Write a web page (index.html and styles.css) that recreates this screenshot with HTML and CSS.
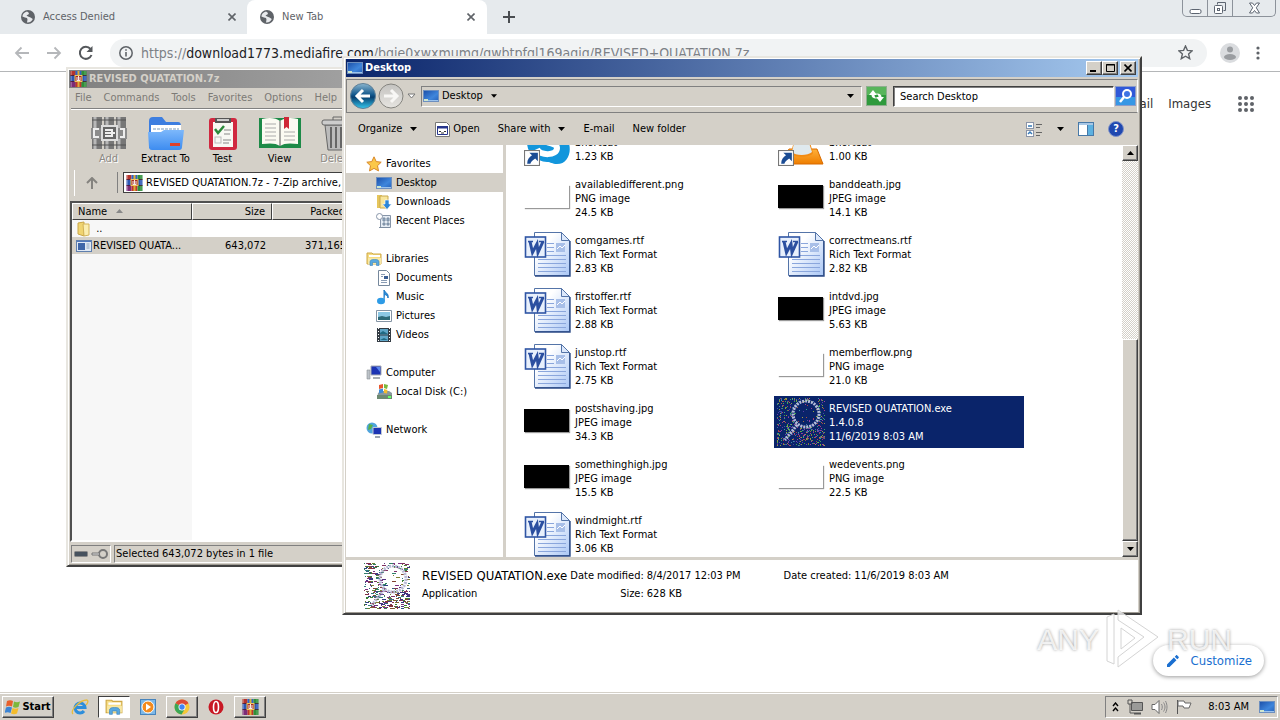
FILE: index.html
```html
<!DOCTYPE html>
<html lang="en">
<head>
    <meta charset="UTF-8">
    <meta name="viewport" content="width=device-width, initial-scale=1.0">
    <title>New Tab</title>
    <link rel="stylesheet" href="styles.css">
    <script src="noise.js" defer></script>
</head>
<body>
    <!-- shared icons -->
    <svg class="defs" width="0" height="0" aria-hidden="true">
        <defs>
            <linearGradient id="gPage" x1="0" y1="0" x2="1" y2="1"><stop offset=".3" stop-color="#fff"/><stop offset="1" stop-color="#a9c6f5"/></linearGradient>
            <linearGradient id="gScreen" x1="0" y1="0" x2="1" y2="1"><stop offset="0" stop-color="#1c4fa8"/><stop offset=".6" stop-color="#3f86dc"/><stop offset="1" stop-color="#2660b8"/></linearGradient>
            <linearGradient id="gBlue" x1="0" y1="0" x2="0" y2="1"><stop offset="0" stop-color="#7db8fb"/><stop offset="1" stop-color="#3d8cf0"/></linearGradient>
            <linearGradient id="gBack" x1="0" y1="0" x2="0" y2="1"><stop offset="0" stop-color="#8ab6cf"/><stop offset=".45" stop-color="#12578c"/><stop offset=".55" stop-color="#073f70"/><stop offset="1" stop-color="#35c8ee"/></linearGradient>
            <linearGradient id="gFwd" x1="0" y1="0" x2="0" y2="1"><stop offset="0" stop-color="#c4c3c0"/><stop offset="1" stop-color="#e6e4e0"/></linearGradient>
            <linearGradient id="gCone" x1="0" y1="0" x2="0" y2="1"><stop offset="0" stop-color="#ffb13a"/><stop offset="1" stop-color="#ee7d00"/></linearGradient>
        </defs>
        <symbol id="globe" viewBox="0 0 14 14">
            <circle cx="7" cy="7" r="7" fill="#5f6368"/>
            <path d="M6 1.500C3.500 2 1.500 4 1.400 6.500L4 7.500l2 .5.500 1.500L6 12.500c3 .3 5-1.500 5.800-3.500L9.500 7.500 7 6.500 5.500 5.500 8 4l-.5-1.500z" fill="#e8eaed"/>
        </symbol>
        <symbol id="cross" viewBox="0 0 8 8"><path d="M.5.500l7 7M7.500.500l-7 7" stroke="#5f6368" stroke-width="1.600"/></symbol>
        <symbol id="desktop" viewBox="0 0 16 14">
            <rect x=".5" y="1.500" width="15" height="11" fill="url(#gScreen)" stroke="#6d8fbf"/>
            <path d="M1 11h14v1H1z" fill="#9cc3ee"/><rect x="1" y="10" width="4" height="2" fill="#cfe6cf"/>
        </symbol>
        <symbol id="rar" viewBox="0 0 16 16">
            <path d="M0 0h5v5H0z" fill="#b5342c"/><path d="M5 0h6v5H5z" fill="#2f62c6"/><path d="M11 0h5v5h-5z" fill="#2f8f3a"/>
            <path d="M0 5h5v5H0z" fill="#2c56b4"/><path d="M11 5h5v5h-5z" fill="#2c56b4"/>
            <path d="M0 10h5v6H0z" fill="#7c2c78"/><path d="M5 10h6v6H5z" fill="#c0342c"/><path d="M11 10h5v6h-5z" fill="#2f8f3a"/>
            <path d="M1 0v16M14.500 0v16" stroke="#fff" stroke-opacity=".25"/>
            <path d="M0 4.500h16M0 10.500h16" stroke="#3d1836" stroke-width=".8"/>
            <path d="M7 0h2v16H7z" fill="#dcae38"/>
            <rect x="4.500" y="4.500" width="7" height="6" fill="#a52a22" stroke="#f0c860"/><path d="M6.500 6v3M8 5v4M9.500 6v3M6 9.500h4" stroke="#fff" stroke-width=".9"/>
        </symbol>
        <symbol id="word" viewBox="0 0 48 48">
            <path d="M11.500 2.500h27l8 8v35h-35z" fill="url(#gPage)" stroke="#5474a8"/>
            <path d="M47 11v35H12" fill="none" stroke="#2b4a86" stroke-width="1.400"/>
            <path d="M38.500 2.500v8h8z" fill="#dce8fb" stroke="#5474a8"/>
            <path d="M24 13.500h7M24 17.500h7M24 21.500h7M15 25.500h28M15 29.500h28M15 33.500h28M15 37.500h28M15 41.500h28" stroke="#8aa6dc"/>
            <rect x="33" y="13" width="9" height="9" fill="#a8bfe8"/><path d="M34 19l3-3 2 2 3-3" stroke="#fff" fill="none"/>
            <rect x="2.500" y="7" width="20" height="20" fill="#e8f0fc" stroke="#2f55a4" stroke-width="1.600"/>
            <path d="M7 11.500l2.500 11 4.500-8.500 1 8.500 5-11" fill="none" stroke="#2b4fa0" stroke-width="3"/>
            <path d="M5 11.500h5M16 11.500h5" stroke="#2b4fa0" stroke-width="1.500"/>
        </symbol>
        <symbol id="link" viewBox="0 0 15 15">
            <rect x=".5" y=".5" width="14" height="14" fill="#fff" stroke="#777"/>
            <path d="M5 2.500h8v8l-2.500-2.500C7.500 10 6.500 11 6 13H3c0-4 2-6.500 4.500-8z" fill="#1b4c94"/>
        </symbol>
        <symbol id="skype" viewBox="0 0 48 48">
            <path d="M24 3c13 0 20 8 20 18 6 10 2 25-10 25-5 0-6-2-10-2C12 43 4 35 4 24S12 3 24 3z" fill="#1296dc"/>
            <path d="M33 15c-3-6-18-6-18 2 0 9 19 6 19 13 0 8-17 8-20 1" fill="none" stroke="#fff" stroke-width="6"/>
        </symbol>
        <symbol id="vlc" viewBox="0 0 48 48">
            <path d="M12 31h28l6 15H3z" fill="url(#gCone)" stroke="#d86b00"/>
            <path d="M22 3h5l9 32c-3 5-19 5-22 0z" fill="#f28a12"/><path d="M17 25h15l3 9c-4 4-17 4-20 0z" fill="#dfe9ee"/>
        </symbol>
        <symbol id="folder" viewBox="0 0 16 16">
            <path d="M2 2l6-1v14l-6-2z" fill="#f0d470" stroke="#c9a648"/><path d="M7 3h6v11l-5 1z" fill="#fbeeb0" stroke="#d4b458"/>
        </symbol>
        <symbol id="lib" viewBox="0 0 16 16">
            <path d="M1 2h5l1 1h8v10H1z" fill="#f5dc83" stroke="#cfa845"/><path d="M3 4h11v2H3z" fill="#fff"/><path d="M2 7h13v6H2z" fill="#f8e8a4"/>
            <path d="M4 14.500V11c0-2 1.500-2.500 4.500-2.500S13 9 13 11v3.500h-2.500V11.500h-4v3z" fill="#58a8e0" stroke="#3a83bd" stroke-width=".6"/>
        </symbol>
        <symbol id="chevd" viewBox="0 0 7 4"><path d="M0 0h7L3.500 4z" fill="#000"/></symbol>
        <symbol id="paint" viewBox="0 0 16 16"><rect x=".5" y="2.500" width="15" height="11" fill="#dfe8f4" stroke="#5f7fae"/><path d="M1 3h14v1H1z" fill="#5279bd"/><path d="M2 5h7v7H2z" fill="#3f66a8"/><path d="M10.500 6h3M10.500 8h3M10.500 10h3" stroke="#8fa4bc"/></symbol>
    </svg>

    <main class="browser">
        <header class="tabs">
            <div class="tab">
                <svg width="14" height="14"><use href="#globe"/></svg>
                <span>Access Denied</span>
                <button aria-label="Close tab"><svg width="8" height="8"><use href="#cross"/></svg></button>
            </div>
            <div class="tab active">
                <svg width="14" height="14"><use href="#globe"/></svg>
                <span>New Tab</span>
                <button aria-label="Close tab"><svg width="8" height="8"><use href="#cross"/></svg></button>
            </div>
            <button class="plus" aria-label="New tab"><svg width="12" height="12" viewBox="0 0 12 12"><path d="M6 0v12M0 6h12" stroke="#4a4d51" stroke-width="2"/></svg></button>
            <div class="caption">
                <button aria-label="Minimize"><svg width="13" height="14" viewBox="0 0 13 14"><rect x="1" y="8.500" width="11" height="4" rx="1.500" fill="#fff" stroke="#5d6571"/></svg></button>
                <button aria-label="Restore"><svg width="14" height="14" viewBox="0 0 14 14"><path d="M4.500 3.500v-2h8v8h-2" fill="none" stroke="#5d6571"/><rect x="1.500" y="4.500" width="8" height="8" rx="1" fill="#fff" stroke="#5d6571"/><rect x="4.500" y="7.500" width="2" height="2" fill="none" stroke="#5d6571"/></svg></button>
                <button class="wide" aria-label="Close"><svg width="13" height="12" viewBox="0 0 13 12"><path d="M1.500 1h3l2 2.500L8.500 1h3L8.300 5.800l3.200 5.200h-3L6.500 8.500 4.500 11h-3l3.200-5.200z" fill="#fff" stroke="#5d6571"/></svg></button>
            </div>
        </header>
        <div class="navbar">
            <button aria-label="Back"><svg width="16" height="14" viewBox="0 0 16 14"><path d="M15 7H2M7.500 1.500L2 7l5.500 5.500" fill="none" stroke="#b5b7ba" stroke-width="1.800"/></svg></button>
            <button aria-label="Forward"><svg width="16" height="14" viewBox="0 0 16 14"><path d="M1 7h13M8.500 1.500L14 7l-5.500 5.500" fill="none" stroke="#b5b7ba" stroke-width="1.800"/></svg></button>
            <button aria-label="Reload"><svg width="16" height="16" viewBox="0 0 16 16"><path d="M13.500 10A6 6 0 1 1 12.500 4" fill="none" stroke="#55585c" stroke-width="2"/><path d="M14.500 1v6h-6z" fill="#55585c"/></svg></button>
            <div class="omnibox">
                <svg width="14" height="14" viewBox="0 0 14 14"><circle cx="7" cy="7" r="6.200" fill="none" stroke="#5f6368" stroke-width="1.500"/><path d="M7 6v4.500M7 3.200v1.600" stroke="#5f6368" stroke-width="1.600"/></svg>
                <span class="url">https://<b>download1773.mediafire.com</b>/bgie0xwxmumg/gwbtpfgl169agig/REVISED+QUATATION.7z</span>
                <svg class="star" width="15" height="15" viewBox="0 0 15 15"><path d="M7.500 1l1.900 4.400 4.800.4-3.600 3.200 1.100 4.700-4.200-2.500-4.200 2.500 1.100-4.700L.8 5.800l4.800-.4z" fill="none" stroke="#5f6368" stroke-width="1.400"/></svg>
            </div>
            <button aria-label="Profile"><svg width="20" height="20" viewBox="0 0 20 20"><circle cx="10" cy="10" r="10" fill="#dadcdf"/><circle cx="10" cy="6.500" r="3" fill="#9a9da1"/><ellipse cx="10" cy="14" rx="6" ry="3" fill="#9a9da1"/></svg></button>
            <button aria-label="Menu"><svg width="4" height="14" viewBox="0 0 4 14"><g fill="#5f6368"><circle cx="2" cy="2" r="1.600"/><circle cx="2" cy="7" r="1.600"/><circle cx="2" cy="12" r="1.600"/></g></svg></button>
        </div>
        <section class="page">
            <nav class="links">
                <a href="#">Gmail</a>
                <a href="#">Images</a>
                <button aria-label="Apps"><svg width="16" height="16" viewBox="0 0 16 16"><g fill="#5f6368"><circle cx="2" cy="2" r="2"/><circle cx="8" cy="2" r="2"/><circle cx="14" cy="2" r="2"/><circle cx="2" cy="8" r="2"/><circle cx="8" cy="8" r="2"/><circle cx="14" cy="8" r="2"/><circle cx="2" cy="14" r="2"/><circle cx="8" cy="14" r="2"/><circle cx="14" cy="14" r="2"/></g></svg></button>
            </nav>
            <button class="customize"><svg width="12" height="12" viewBox="0 0 14 14"><path d="M0 14v-3l8-8 3 3-8 8zM9 2l1.500-1.500c.5-.5 1-.5 1.500 0L13.500 2c.5.500.5 1 0 1.500L12 5z" fill="#1a6fd0"/></svg>Customize</button>
        </section>
    </main>

    <section class="window rarwin">
        <div class="title off"><svg width="17" height="16"><use href="#rar"/></svg>REVISED QUATATION.7z</div>
        <div class="menu"><span>File</span><span>Commands</span><span>Tools</span><span>Favorites</span><span>Options</span><span>Help</span></div>
        <div class="rartools">
            <button class="dim"><svg width="36" height="36" viewBox="0 0 36 36"><path d="M1 2h10v32H1zM13 2h10v32H13zM25 2h10v32H25z" fill="#777"/><path d="M4 2v32M16 2v32M28 2v32" stroke="#b8b8b8" stroke-width="3"/><path d="M1 5h34M1 30h34" stroke="#555"/><path d="M0 13h36v11H0z" fill="#8c8c8c"/><rect x="11" y="11" width="15" height="14" fill="#666" stroke="#ddd" stroke-width="2"/><path d="M8 14H3v8h5M29 14h4v8h-4M14 15h7v6h-7M14 18h10" fill="none" stroke="#eee" stroke-width="2"/></svg>Add</button>
            <button><svg width="36" height="36" viewBox="0 0 36 36"><path d="M1 6q0-4 4-4h9l4 5h12q3 0 3 4v22H1z" fill="#3d7ee0"/><path d="M3 10h30v12H3z" fill="#fff"/><path d="M5 14h26" stroke="#bcd" stroke-width="2" stroke-dasharray="3 1"/><path d="M0 17h13l3-2h20l-2 17q0 3-3 3H4q-3 0-3-3z" fill="url(#gBlue)"/><rect x="22" y="28" width="10" height="3" fill="#e0402c"/></svg>Extract To</button>
            <button><svg width="36" height="36" viewBox="0 0 36 36"><rect x="4" y="3" width="28" height="32" rx="3" fill="#d02840"/><rect x="8" y="7" width="20" height="25" fill="#f8f8f4"/><path d="M10 3h16v5H10z" fill="#555"/><path d="M12 5h12" stroke="#ccc" stroke-width="2"/><path d="M10 14l3 4 6-7" fill="none" stroke="#2c8a3c" stroke-width="2.500"/><path d="M19 15h7M19 19h6M18 25h8M18 28h6" stroke="#888"/><rect x="10" y="22" width="6" height="6" fill="none" stroke="#bbb"/></svg>Test</button>
            <button><svg width="42" height="36" viewBox="0 0 42 36"><path d="M0 3h42v30H0z" fill="#1d8a48"/><path d="M3 4c8-2 14-1 18 2 4-3 10-4 18-2v25c-8-1-14-1-18 2-4-3-10-3-18-2z" fill="#fbfaf2"/><path d="M21 6v25" stroke="#555"/><path d="M6 9h11M6 13h11M6 17h11M6 21h11M6 25h11M25 17h11M25 21h11M25 25h11" stroke="#aaa"/><path d="M25 2h5v12l-2.500-2-2.500 2z" fill="#cf2736"/></svg>View</button>
            <button class="dim"><svg width="36" height="36" viewBox="0 0 36 36"><path d="M6 10h25l-2 25H9z" fill="#bbb" stroke="#666"/><path d="M12 12v21M17 12v21M22 12v21M27 12v21" stroke="#666" stroke-width="2"/><rect x="3" y="5" width="31" height="5" rx="2" fill="#ccc" stroke="#666"/><path d="M14 5V2h9v3" fill="none" stroke="#666"/></svg>Delete</button>
        </div>
        <div class="raraddr">
            <button aria-label="Up"><svg width="12" height="12" viewBox="0 0 12 12"><path d="M6 12V1M1 6l5-5 5 5" fill="none" stroke="#85837f" stroke-width="2"/></svg></button>
            <label class="path"><svg width="17" height="16"><use href="#rar"/></svg><input aria-label="Archive path" value="REVISED QUATATION.7z - 7-Zip archive, unpacked size 643,072 bytes"></label>
        </div>
        <div class="rarlist">
            <table>
                <thead><tr><th class="name">Name <svg width="7" height="4" viewBox="0 0 7 4"><path d="M0 4h7L3.500 0z" fill="#888"/></svg></th><th class="num">Size</th><th class="num">Packed</th><th>Type</th></tr></thead>
                <tbody>
                    <tr><td><svg width="16" height="16"><use href="#folder"/></svg> ..</td><td></td><td></td><td></td></tr>
                    <tr class="sel"><td><svg width="16" height="16"><use href="#paint"/></svg>REVISED QUATA...</td><td class="num">643,072</td><td class="num">371,165</td><td>Application</td></tr>
                </tbody>
            </table>
        </div>
        <div class="rarstatus">
            <span><svg width="36" height="12" viewBox="0 0 36 12"><rect x="1.500" y="3.500" width="13" height="5" rx="1" fill="#47525e" stroke="#888"/><circle cx="30" cy="6" r="4" fill="none" stroke="#777" stroke-width="2"/><path d="M26 5h-7v2h7" fill="#ddd" stroke="#777"/></svg></span>
            <span class="grow">Selected 643,072 bytes in 1 file</span>
        </div>
    </section>

    <section class="window explorer">
        <div class="title"><svg width="16" height="14"><use href="#desktop"/></svg>Desktop
            <div class="winbtns">
                <button aria-label="Minimize"><svg width="8" height="8" viewBox="0 0 8 8"><path d="M0 6h6v2H0z"/></svg></button>
                <button aria-label="Maximize"><svg width="9" height="8" viewBox="0 0 9 8"><path d="M.5.500h8v7h-8zM0 1h9" fill="none" stroke="#000"/></svg></button>
                <button class="shut" aria-label="Close"><svg width="8" height="8" viewBox="0 0 8 8"><path d="M.5.500l7 7M7.500.500l-7 7" stroke="#000" stroke-width="1.600"/></svg></button>
            </div>
        </div>
        <div class="address">
            <button aria-label="Back"><svg width="26" height="26" viewBox="0 0 26 26"><circle cx="13" cy="13" r="12.500" fill="url(#gBack)" stroke="#5f7f96"/><path d="M20 13H8M13 7l-6 6 6 6" fill="none" stroke="#fff" stroke-width="3"/></svg></button>
            <button aria-label="Forward"><svg width="26" height="26" viewBox="0 0 26 26"><circle cx="13" cy="13" r="12" fill="url(#gFwd)" stroke="#85847f"/><path d="M6 13h12M13 7l6 6-6 6" fill="none" stroke="#f8f7f5" stroke-width="3"/></svg></button>
            <button class="hist" aria-label="Recent pages"><svg width="9" height="6" viewBox="0 0 9 6"><path d="M1 1h7L4.500 5z" fill="#fff" stroke="#777"/></svg></button>
            <div class="crumb"><svg width="16" height="14"><use href="#desktop"/></svg><span>Desktop</span><svg width="6" height="4"><use href="#chevd"/></svg><svg class="end" width="7" height="4"><use href="#chevd"/></svg></div>
            <button class="sq" aria-label="Refresh"><svg width="21" height="20" viewBox="0 0 21 20"><rect x=".5" y=".5" width="20" height="19" fill="#2f9a3c" stroke="#8fae8f"/><path d="M1 1h19v8H1z" fill="#74c870" opacity=".6"/><path d="M3 9l4-5 4 5H8.500c0 2 1 3 3 3.500C7.500 13 5.500 11.500 5.500 9zM18 11l-4 5-4-5h2.500c0-2-1-3-3-3.500 4-.5 6 1 6 3.500z" fill="#fff"/></svg></button>
            <input class="search" type="text" aria-label="Search Desktop" placeholder="Search Desktop">
            <button class="sq" aria-label="Search"><svg width="21" height="20" viewBox="0 0 21 20"><rect x=".5" y=".5" width="20" height="19" fill="#3058d8" stroke="#8c9cc8"/><path d="M1 11h19v8H1z" fill="#38a8e8" opacity=".8"/><circle cx="12" cy="8" r="4" fill="#3e74e4" stroke="#fff" stroke-width="2"/><path d="M9 11l-4 5" stroke="#fff" stroke-width="2.500"/></svg></button>
        </div>
        <div class="commands">
            <button>Organize<svg width="7" height="4"><use href="#chevd"/></svg></button>
            <button class="open"><svg width="15" height="15" viewBox="0 0 15 15"><path d="M.5.500h11l3 3v11H.5z" fill="#fff" stroke="#777"/><path d="M2.500 4.500h10v8h-10z" fill="#fff" stroke="#26358c"/><path d="M2 4h11v2.500H2z" fill="#26358c"/><path d="M4 9.500h2M9 9.500h2M6 11h3" stroke="#333"/></svg>Open</button>
            <button>Share with<svg width="7" height="4"><use href="#chevd"/></svg></button>
            <button>E-mail</button>
            <button>New folder</button>
            <div class="views">
                <button aria-label="Change view"><svg width="17" height="15" viewBox="0 0 17 15"><rect x=".5" y=".5" width="7" height="6" fill="#fff" stroke="#8a94a8"/><rect x=".5" y="8.500" width="7" height="6" fill="#fff" stroke="#8a94a8"/><path d="M2 4h4M2 12l2-2 2 2" stroke="#3579b8" stroke-width="1.500" fill="none"/><path d="M10 2.500h6M10 5.500h4M10 10.500h6M10 13.500h4" stroke="#666"/></svg></button>
                <button aria-label="View options"><svg width="7" height="4"><use href="#chevd"/></svg></button>
                <button class="pane" aria-label="Preview pane"><svg width="16" height="14" viewBox="0 0 16 14"><rect x=".5" y=".5" width="15" height="13" fill="#fff" stroke="#4779a8"/><path d="M1 1h14v2H1z" fill="#a9c8e6"/><path d="M10 3h5v10h-5z" fill="#5db1e0"/><path d="M9.500 3v10" stroke="#4779a8"/></svg></button>
                <button class="help" aria-label="Help">?</button>
            </div>
        </div>
        <div class="body">
            <nav class="tree">
                <a href="#" class="root"><svg width="16" height="16" viewBox="0 0 16 16"><path d="M8 .8l2.200 4.800 5 .6-3.700 3.500 1 5.200L8 12.400l-4.500 2.500 1-5.200L.8 6.200l5-.6z" fill="#fbc84a" stroke="#d8882a"/></svg>Favorites</a>
                <a href="#" class="on"><svg width="16" height="14"><use href="#desktop"/></svg>Desktop</a>
                <a href="#"><svg width="16" height="16" viewBox="0 0 16 16"><path d="M1 1h5v13H1z" fill="#e6c65c"/><path d="M4 2h8v12H4z" fill="#f8e59a" stroke="#c8a84c"/><path d="M9 6h4v4h2.500L11 15.500 6.500 10H9z" fill="#2c86d8" stroke="#fff" stroke-width=".6"/></svg>Downloads</a>
                <a href="#"><svg width="16" height="16" viewBox="0 0 16 16"><path d="M4.500 2.500h10v12h-10z" fill="#e4ecf4" stroke="#8795a8"/><path d="M3 14.500h11M7 5h2v3H7zM11 5h2v3h-2zM7 10h2v2H7zM11 10h2v2h-2z" fill="#8fb0cc" stroke="#7c8ca0"/><circle cx="3.500" cy="3.500" r="3" fill="#fff" stroke="#8795a8"/></svg>Recent Places</a>
                <a href="#" class="root gap"><svg width="16" height="16"><use href="#lib"/></svg>Libraries</a>
                <a href="#"><svg width="16" height="16" viewBox="0 0 16 16"><path d="M2.500.500h8l3 3v12h-11z" fill="#fff" stroke="#76889c"/><path d="M5 4.500h4M5 6.500h2M5 10.500h6M5 12.500h6" stroke="#8a9cb4"/><path d="M8 6h4v3H8z" fill="#3a5f94"/></svg>Documents</a>
                <a href="#"><svg width="16" height="16" viewBox="0 0 16 16"><path d="M8 12V1c1 3 5 3 4 8 0-2-1.500-3-3-3.500" fill="#2d8fdc" stroke="#1b78c4"/><ellipse cx="5" cy="12" rx="4" ry="3.200" fill="#2d9be6"/></svg>Music</a>
                <a href="#"><svg width="16" height="16" viewBox="0 0 16 16"><path d="M.5 2.500h15v11H.5z" fill="#fff" stroke="#8494a4"/><path d="M2 4h12v8H2z" fill="#8cc8e4"/><path d="M2 9l4-1 4 1 4-1v4H2z" fill="#2d6a78"/></svg>Pictures</a>
                <a href="#"><svg width="16" height="16" viewBox="0 0 16 16"><path d="M1 1h14v14H1z" fill="#333c44"/><path d="M4 2h8v5.500H4zM4 8.500h8V14H4z" fill="#5fa6c8"/><path d="M2.500 1v14M13.500 1v14" stroke="#fff" stroke-dasharray="1 2"/><path d="M4 6l3-2 5 3H4zM4 13l4-2 4 2z" fill="#1f6a84"/></svg>Videos</a>
                <a href="#" class="root gap"><svg width="16" height="16" viewBox="0 0 16 16"><path d="M1 5h3v9H1z" fill="#bcc2c8" stroke="#8a9096" stroke-width=".6"/><path d="M5 1h10v9H5z" fill="#1c34b4" stroke="#a4aab4"/><path d="M10 2h4v5z" fill="#5c88f0"/><path d="M7 12h7v2H7z" fill="#a8aeb4"/></svg>Computer</a>
                <a href="#"><svg width="16" height="16" viewBox="0 0 16 16"><path d="M2 9l3-2h8l3 2v6H1z" fill="#8a989c"/><path d="M1 11h15v4H1z" fill="#6d8a72"/><path d="M12 12h3v2h-3z" fill="#6f6"/><path d="M3 1l4-1v4l-4 1z" fill="#e8562c"/><path d="M8 0l4 1-1 4-3-1z" fill="#7cb83c"/><path d="M3 5.500l4-1v4l-4 1z" fill="#3c8cd8"/><path d="M8 5l3.500 1-.5 3.500L8 9z" fill="#f4bc2c"/></svg>Local Disk (C:)</a>
                <a href="#" class="root gap"><svg width="16" height="16" viewBox="0 0 16 16"><circle cx="6" cy="6" r="5.500" fill="#4fa4dc"/><path d="M3 2l4 1-2 4-3 1zM7 7l3 1-2 3z" fill="#58b048"/><path d="M7 5.500h8.500v7H7z" fill="#1c34b4" stroke="#c0c8d4"/><path d="M9 14h5v2H9z" fill="#9aa4b0"/></svg>Network</a>
            </nav>
            <div class="files">
                <ul>
                    <li><div class="ico"><svg width="48" height="48"><use href="#skype"/></svg><svg class="badge" width="16" height="16"><use href="#link"/></svg></div><p><br>Shortcut<br>1.23 KB</p></li>
                    <li><div class="ico"><svg width="48" height="48"><use href="#vlc"/></svg><svg class="badge" width="16" height="16"><use href="#link"/></svg></div><p><br>Shortcut<br>1.00 KB</p></li>
                    <li><div class="ico"><i class="thumb"></i></div><p>availabledifferent.png<br>PNG image<br>24.5 KB</p></li>
                    <li><div class="ico"><i class="thumb black"></i></div><p>banddeath.jpg<br>JPEG image<br>14.1 KB</p></li>
                    <li><div class="ico"><svg width="48" height="48"><use href="#word"/></svg></div><p>comgames.rtf<br>Rich Text Format<br>2.83 KB</p></li>
                    <li><div class="ico"><svg width="48" height="48"><use href="#word"/></svg></div><p>correctmeans.rtf<br>Rich Text Format<br>2.82 KB</p></li>
                    <li><div class="ico"><svg width="48" height="48"><use href="#word"/></svg></div><p>firstoffer.rtf<br>Rich Text Format<br>2.88 KB</p></li>
                    <li><div class="ico"><i class="thumb black"></i></div><p>intdvd.jpg<br>JPEG image<br>5.63 KB</p></li>
                    <li><div class="ico"><svg width="48" height="48"><use href="#word"/></svg></div><p>junstop.rtf<br>Rich Text Format<br>2.75 KB</p></li>
                    <li><div class="ico"><i class="thumb"></i></div><p>memberflow.png<br>PNG image<br>21.0 KB</p></li>
                    <li><div class="ico"><i class="thumb black"></i></div><p>postshaving.jpg<br>JPEG image<br>34.3 KB</p></li>
                    <li class="picked"><div class="ico"><canvas class="noise" data-mode="dark" width="48" height="48"></canvas></div><p>REVISED QUATATION.exe<br>1.4.0.8<br>11/6/2019 8:03 AM</p></li>
                    <li><div class="ico"><i class="thumb black"></i></div><p>somethinghigh.jpg<br>JPEG image<br>15.5 KB</p></li>
                    <li><div class="ico"><i class="thumb"></i></div><p>wedevents.png<br>PNG image<br>22.5 KB</p></li>
                    <li><div class="ico"><svg width="48" height="48"><use href="#word"/></svg></div><p>windmight.rtf<br>Rich Text Format<br>3.06 KB</p></li>
                </ul>
            </div>
            <div class="scroll">
                <button aria-label="Scroll up"><svg width="7" height="4" viewBox="0 0 7 4"><path d="M0 4h7L3.500 0z"/></svg></button>
                <div class="track"></div>
                <div class="grip"></div>
                <button aria-label="Scroll down"><svg width="7" height="4"><use href="#chevd"/></svg></button>
            </div>
        </div>
        <footer class="details">
            <canvas class="noise" data-mode="light" width="46" height="46"></canvas>
            <dl>
                <dd class="filename">REVISED QUATATION.exe</dd><dt>Date modified:</dt><dd>8/4/2017 12:03 PM</dd><dt>Date created:</dt><dd>11/6/2019 8:03 AM</dd>
                <dd>Application</dd><dt>Size:</dt><dd>628 KB</dd>
            </dl>
        </footer>
    </section>

    <div class="mark" aria-hidden="true">
        <span>ANY</span>
        <svg width="60" height="64" viewBox="0 0 60 64"><g fill="rgba(255,255,255,.75)" stroke="#d4d4d4" stroke-width="1"><path d="M4 9l7-3v50l-7-3z"/><path d="M15 2l40 27-40 30v-10l26-20-26-17z"/><path d="M18 20l14 10-14 11z"/></g></svg>
        <span>RUN</span>
    </div>

    <footer class="taskbar">
        <button class="start"><svg width="16" height="16" viewBox="0 0 16 16"><path d="M2 2c2-1 4-1 6 0L7 7.500c-2-1-4-1-6 0z" fill="#e8602c"/><path d="M9 2.500c2 1 4 1 6 0l-1.500 5.500c-2 1-4 1-5.500 0z" fill="#7cb83c"/><path d="M1 8.500c2-1 4-1 6 0L5.500 14c-2-1-4-1-6 0z" fill="#3c84d4"/><path d="M7.500 9c2 1 4 1 6 0L12 14.500c-2 1-4 1-6 0z" fill="#f4bc2c"/></svg>Start</button>
        <button class="app" aria-label="Internet Explorer"><svg width="18" height="18" viewBox="0 0 18 18"><path d="M4.500 9.500h9.500A5 5 0 1 0 13 13" fill="none" stroke="#2d8edb" stroke-width="3"/><path d="M2 16C-1 13 8 2 16 2c2 1 0 4-1 5" fill="none" stroke="#e8bc3c" stroke-width="1.300"/></svg></button>
        <button class="app current" aria-label="Windows Explorer"><svg width="18" height="18"><use href="#lib"/></svg></button>
        <button class="app" aria-label="Media Player"><svg width="16" height="16" viewBox="0 0 16 16"><rect x=".5" y=".5" width="15" height="15" fill="#7cb8e8" stroke="#4784bc"/><circle cx="8" cy="8" r="6" fill="#f38b1e" stroke="#fff"/><path d="M6 4.500l5 3.500-5 3.500z" fill="#fff"/></svg></button>
        <button class="app raised" aria-label="Chrome"><svg width="16" height="16" viewBox="0 0 16 16"><circle cx="8" cy="8" r="7.500" fill="#f5c83a"/><path d="M8 8L1.500 4.300A7.500 7.500 0 0 1 14.500 4.300z" fill="#dc4a38"/><path d="M8 8L1.500 4.300A7.500 7.500 0 0 0 7.500 15.500l3-5z" fill="#3aa757"/><circle cx="8" cy="8" r="3.500" fill="#fff"/><circle cx="8" cy="8" r="2.700" fill="#4285f4"/></svg></button>
        <button class="app" aria-label="Opera"><svg width="16" height="16" viewBox="0 0 16 16"><circle cx="8" cy="8" r="7.500" fill="#c81824"/><ellipse cx="8" cy="8" rx="2.500" ry="5.500" fill="#c81824" stroke="#fff" stroke-width="1.600"/></svg></button>
        <button class="app raised" aria-label="WinRAR"><svg width="17" height="16"><use href="#rar"/></svg></button>
        <div class="tray">
            <svg width="7" height="10" viewBox="0 0 7 10"><path d="M1 4l2.500-3L6 4M1 9l2.500-3L6 9" fill="none" stroke="#000" stroke-width="1.400"/></svg>
            <svg width="16" height="16" viewBox="0 0 16 16"><path d="M4.500 3.500h11v8h-11z" fill="#9a9a98" stroke="#555"/><path d="M7 14.500h7" stroke="#555" stroke-width="2"/><path d="M1 1h4v4H1zM3 5v9h4" fill="none" stroke="#555"/></svg>
            <svg width="17" height="16" viewBox="0 0 17 16"><path d="M1 5.500h3l4-4v13l-4-4H1z" fill="#fff" stroke="#666"/><path d="M10.500 5c1 2 1 4 0 6M12.500 3.500c2 3 2 6 0 9M14.500 2c2 4 2 8 0 12" fill="none" stroke="#888"/></svg>
            <svg width="16" height="16" viewBox="0 0 16 16"><path d="M1.500 1v14" stroke="#555"/><path d="M2 2h6l1 2h6l-2 5H8L7 7H2z" fill="#fff" stroke="#666"/></svg>
            <time>8:03 AM</time>
            <svg width="16" height="14"><use href="#desktop"/></svg>
        </div>
    </footer>
</body>
</html>
```

FILE: styles.css
```css
*{
    box-sizing: border-box;
    margin: 0;
    padding: 0;
}
html, body{
    height: 100%;
}
body{
    display: flex;
    flex-direction: column;
    position: relative;
    overflow: hidden;
    background: #fff;
    color: #000;
    font: 11px/14px "DejaVu Sans Condensed", "DejaVu Sans", sans-serif;
    white-space: nowrap;
}
button, input{
    font: inherit;
    color: inherit;
    background: none;
    border: 0;
}
button{
    display: flex;
    align-items: center;
    justify-content: center;
    flex-shrink: 0;
}
svg{
    flex-shrink: 0;
}
.defs{
    position: absolute;
}
a{
    color: inherit;
    text-decoration: none;
}

/* browser */
.browser{
    flex: 1;
    display: flex;
    flex-direction: column;
    min-height: 0;
}
.tabs{
    display: flex;
    height: 34px;
    padding-left: 7px;
    background: #e6eaed;
}
.tab{
    display: flex;
    align-items: center;
    gap: 8px;
    width: 240px;
    padding: 0 11px 0 14px;
    color: #5f6368;
}
.tab span{
    flex: 1;
}
.tab.active{
    background: #fff;
    border-radius: 8px 8px 0 0;
    padding: 0 12px 0 13px;
}
.plus{
    width: 44px;
}
.caption{
    display: flex;
    height: 17px;
    margin-left: auto;
    margin-right: 4px;
    border: 1px solid #8c929a;
    border-top: 0;
    border-radius: 0 0 5px 5px;
}
.caption button{
    width: 25px;
    border-right: 1px solid #8c929a;
}
.caption .wide{
    width: 42px;
    border-right: 0;
}
.navbar{
    display: flex;
    align-items: center;
    gap: 16px;
    height: 38px;
    padding: 0 20px 0 14px;
    border-bottom: 1px solid #b4b6b8;
}
.omnibox{
    flex: 1;
    display: flex;
    align-items: center;
    gap: 8px;
    height: 28px;
    margin-right: -3px;
    padding: 0 14px 0 9px;
    border-radius: 14px;
    background: #f1f3f4;
    font-size: 14px;
    color: #7d8186;
}
.omnibox b{
    font-weight: normal;
    color: #202124;
}
.star{
    margin-left: auto;
}
.page{
    flex: 1;
    display: flex;
    flex-direction: column;
    justify-content: space-between;
    align-items: flex-end;
    padding: 24px 16px 16px;
}
.links{
    display: flex;
    align-items: center;
    gap: 15px;
    padding-right: 10px;
    font-size: 13px;
    line-height: 16px;
    color: #333;
}
.links button{
    margin-left: 12px;
}
.customize{
    gap: 12px;
    height: 31px;
    padding: 0 12px 0 14px;
    border-radius: 16px;
    box-shadow: 0 1px 4px rgba(0, 0, 0, .4);
    font-size: 13px;
    color: #1a6fd0;
}

/* classic windows */
.window{
    position: absolute;
    display: flex;
    flex-direction: column;
    padding: 1px;
    background: #d4d0c8;
    border: 2px solid;
    border-color: #e8e6e0 #404040 #404040 #e8e6e0;
    box-shadow: inset 1px 1px #fff, inset -1px -1px #a09c94;
}
.title{
    display: flex;
    align-items: center;
    gap: 2px;
    height: 18px;
    padding: 0 2px 0 1px;
    background: linear-gradient(90deg, #0a246a, #a6caf0);
    color: #fff;
    font-weight: bold;
}
.title.off{
    background: linear-gradient(90deg, #808080, #c0c0c0);
    color: #d4d0c8;
}
.winbtns{
    display: flex;
    margin-left: auto;
}
.winbtns button, .scroll button, .grip, .start, .raised{
    background: #d4d0c8;
    border: 1px solid;
    border-color: #fff #404040 #404040 #fff;
    box-shadow: inset -1px -1px #808080;
}
.winbtns button{
    width: 16px;
    height: 14px;
}
.winbtns .shut{
    margin-left: 2px;
}

/* archive window */
.rarwin{
    left: 66px;
    top: 67px;
    right: 654px;
    bottom: 153px;
}
.menu{
    display: flex;
    align-items: center;
    gap: 12px;
    height: 20px;
    padding-left: 6px;
    color: #7c7a76;
}
.rartools{
    display: flex;
    height: 62px;
    margin-left: 2px;
    padding: 6px 0 0 9px;
    border-top: 1px solid #808080;
    box-shadow: inset 0 1px #fff;
}
.rartools button{
    flex-direction: column;
    justify-content: flex-start;
    width: 57px;
    line-height: 15px;
}
.rartools .dim{
    color: #8c8984;
    text-shadow: 1px 1px #fff;
}
.raraddr{
    display: flex;
    height: 26px;
    margin: 0 0 5px 5px;
    padding: 2px 0 3px;
    border-left: 1px solid #fff;
}
.raraddr button{
    width: 43px;
    padding-right: 8px;
    border-right: 1px solid #808080;
}
.path{
    flex: 1;
    display: flex;
    align-items: center;
    margin-left: 5px;
    padding-left: 2px;
    background: #fff;
    border: 1px solid #404040;
}
.path input{
    flex: 1;
    min-width: 0;
    padding-left: 3px;
}
.rarlist{
    flex: 1;
    margin-left: 1px;
    border: 2px solid;
    border-color: #505050 #fff #fff #505050;
    background: linear-gradient(90deg, #f7f7f7 120px, #fff 120px);
}
.rarlist table{
    width: 100%;
    table-layout: fixed;
    border-spacing: 0;
}
.rarlist th, .rarlist td{
    width: 80px;
    height: 17px;
    padding: 0 6px 0 5px;
    font-weight: normal;
    text-align: left;
    overflow: hidden;
}
.rarlist th{
    background: #d4d0c8;
    border: 1px solid;
    border-color: #fff #404040 #404040 #fff;
}
.rarlist th:last-child{
    width: auto;
}
.rarlist td{
    padding-left: 4px;
}
.rarlist td svg{
    vertical-align: middle;
    margin-right: 1px;
}
.rarlist .name{
    width: 120px;
}
.rarlist th svg{
    margin: 0 0 2px 6px;
}
.rarlist .num{
    text-align: right;
}
.rarlist .sel td{
    background: #d4d0c8;
}
.rarstatus{
    display: flex;
    gap: 3px;
    padding: 3px 2px 1px;
}
.rarstatus span{
    display: flex;
    align-items: center;
    height: 18px;
    padding: 0 1px;
    border: 1px solid;
    border-color: #808080 #fff #fff #808080;
}
.rarstatus .grow{
    flex: 1;
}

/* explorer window */
.explorer{
    left: 342px;
    top: 56px;
    right: 138px;
    bottom: 105px;
    padding: 1px 2px 1px 2px;
}
.address{
    display: flex;
    align-items: center;
    height: 34px;
    margin-top: 2px;
    padding: 0 1px 0 3px;
    border: 1px solid;
    border-color: #808080 #fff #808080 #808080;
}
.address button + button{
    margin-left: 2px;
}
.address .hist{
    width: 14px;
    height: 20px;
    margin: 0;
}
.address .hist.hist{
    margin-left: 0;
}
.crumb{
    flex: 1;
    display: flex;
    align-items: center;
    height: 21px;
    margin: 0 4px 0 3px;
    padding: 0 7px 0 1px;
    border: 1px solid;
    border-color: #808080 #fff #fff #808080;
}
.crumb span{
    margin: 0 8px 0 3px;
}
.crumb .end{
    margin-left: auto;
}
.search{
    width: 221px;
    height: 21px;
    margin: 0 1px 0 6px;
    padding: 0 6px;
    background: #fff;
    border: 1px solid;
    border-color: #404040 #fff #fff #404040;
    box-shadow: inset 1px 1px #808080;
}
.search::placeholder{
    color: #000;
}
.commands{
    display: flex;
    align-items: center;
    gap: 18px;
    height: 32px;
    padding: 0 14px 0 12px;
}
.commands button{
    gap: 8px;
}
.commands .open{
    gap: 3px;
}
.views{
    display: flex;
    align-items: center;
    gap: 14px;
    margin-left: auto;
}
.views .help{
    width: 16px;
    height: 16px;
    border-radius: 50%;
    border: 1px solid #7f92c8;
    background: #2048b0;
    color: #fff;
    font-weight: bold;
}
.body{
    flex: 1;
    display: flex;
    min-height: 0;
}
.tree{
    width: 160px;
    padding-top: 9px;
    background: #fff;
    border-right: 3px solid #d4d0c8;
}
.tree a{
    display: flex;
    align-items: center;
    gap: 4px;
    height: 19px;
    padding: 1px 0 0 30px;
}
.tree .root{
    padding-left: 20px;
}
.tree .gap{
    margin-top: 19px;
}
.tree .on{
    background: #d4d0c8;
}
.files{
    flex: 1;
    overflow: hidden;
    background: #fff;
}
.files ul{
    display: grid;
    grid-template-columns: repeat(auto-fill, 250px);
    gap: 4px;
    margin-top: -29px;
    padding-left: 14px;
    max-width: 540px;
    list-style: none;
}
.files li{
    display: flex;
    align-items: center;
    gap: 4px;
    height: 52px;
    padding-left: 3px;
}
.files p{
    padding-top: 2px;
}
.files .picked{
    background: #0a246a;
    color: #fff;
}
.ico{
    position: relative;
    display: flex;
    align-items: center;
    width: 48px;
    height: 48px;
}
.badge{
    position: absolute;
    left: 1px;
    bottom: 0;
}
.thumb{
    width: 45px;
    height: 23px;
    margin: 0 0 3px 1px;
    background: #fff;
    box-shadow: 1px 1px 1px #999;
}
.thumb.black{
    background: #000;
}
.scroll{
    display: flex;
    flex-direction: column;
    width: 16px;
}
.scroll button{
    height: 16px;
}
.track{
    height: 178px;
    background: repeating-conic-gradient(#fff 0 25%, #d4d0c8 0 50%) 0 0 / 2px 2px;
}
.grip{
    flex: 1;
}
.details{
    display: flex;
    align-items: center;
    gap: 12px;
    height: 52px;
    margin-top: 3px;
    padding-left: 18px;
    background: #fff;
}
.details dl{
    display: grid;
    grid-template-columns: repeat(5, auto);
    gap: 4px 3px;
    padding-bottom: 3px;
}
.details .filename{
    font-size: 13px;
}
.details dt{
    text-align: right;
}
.details dt:nth-of-type(2){
    margin-left: 40px;
}

/* watermark */
.mark{
    position: absolute;
    right: 48px;
    bottom: 48px;
    display: flex;
    align-items: center;
    gap: 4px;
    font: 30px/32px "Liberation Sans", sans-serif;
    color: rgba(255, 255, 255, .8);
    text-shadow: 0 0 3px #999;
    pointer-events: none;
}

/* taskbar */
.taskbar{
    display: flex;
    align-items: center;
    height: 28px;
    padding: 1px 2px 0;
    background: #d4d0c8;
    border-top: 1px solid #d4d0c8;
    box-shadow: inset 0 1px #fff;
}
.start{
    gap: 1px;
    width: 52px;
    height: 22px;
    margin-right: 10px;
    font-weight: bold;
}
.app{
    width: 32px;
    height: 22px;
    margin-right: 2px;
}
.current{
    background: #fff;
    border: 1px solid;
    border-color: #404040 #fff #fff #404040;
}
.tray{
    display: flex;
    align-items: center;
    gap: 8px;
    height: 22px;
    margin-left: auto;
    padding: 0 2px 0 6px;
    border: 1px solid;
    border-color: #808080 #fff #fff #808080;
}
.tray time{
    margin: 0 2px 0 8px;
}
```

FILE: noise.js
```javascript
// speckled magnifier icon of the exe file
function drawNoise(c)
{
    var g = c.getContext('2d');
    var dark = c.getAttribute('data-mode') == 'dark';
    var seed = 7;

    function rnd()
    {
        seed = (seed * 16807) % 2147483647;
        return seed / 2147483647;
    }

    for (var i = 0; i < (dark ? 620 : 420); i ++)
    {
        var x = Math.floor(rnd() * c.width);
        var y = Math.floor(rnd() * c.height);
        var d = Math.sqrt((x - 29) * (x - 29) + (y - 16) * (y - 16));
        if (d < 12 && rnd() < 0.8)
        {
            continue;
        }
        g.fillStyle = 'hsl(' + Math.floor(rnd() * 360) + ', 45%, ' + (dark ? 45 : 35) + '%)';
        g.fillRect(x, y, dark ? 1 : 1 + Math.floor(rnd() * 4), 1);
    }

    g.strokeStyle = dark ? '#b4bcd8' : '#b8b8d4';
    g.lineWidth = 3;
    g.setLineDash([2, 1]);
    g.beginPath();
    g.arc(29, 16, 13, 0, Math.PI * 2);
    g.moveTo(20, 27);
    g.lineTo(8, 42);
    g.stroke();
}

var list = document.getElementsByClassName('noise');
for (var i = 0; i < list.length; i ++)
{
    drawNoise(list[i]);
}
```
